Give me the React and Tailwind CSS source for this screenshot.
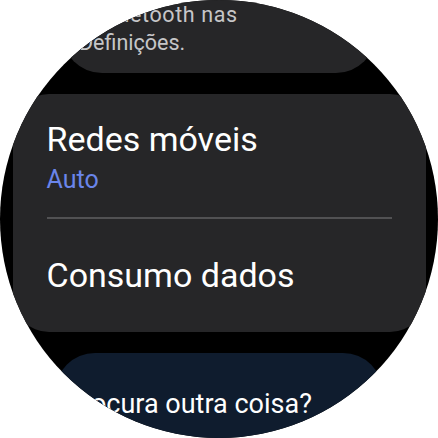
export default function App() {
    return (
        <div className="w-[438px] h-[438px] bg-white" style={{ fontFamily: "Roboto, 'Noto Sans', sans-serif" }}>
            {/* watch face */}
            <div className="w-[438px] h-[438px] rounded-full bg-black overflow-hidden flex flex-col items-center">
                {/* previous card, scrolled off the top */}
                <div className="w-[314px] -mt-[40px] pt-[41px] pb-[16px] pl-[17px] rounded-[40px] bg-[#262628] shrink-0">
                    <p className="text-[21.5px] leading-[28px] tracking-[0.6px] text-[#c6c6c8]">o Bluetooth nas</p>
                    <p className="text-[21.5px] leading-[28px] text-[#c6c6c8]">Definições.</p>
                </div>

                {/* main card */}
                <div className="w-[413px] mt-[21px] pt-[25px] pb-[37px] px-[34px] rounded-[36px] bg-[#262628] shrink-0">
                    <p className="text-[34px] leading-[40px] text-white">Redes móveis</p>
                    <p className="mt-[6px] text-[25px] leading-[30px] text-[#6a85ea]">Auto</p>
                    <div className="mt-[22px] h-[2px] bg-[#515153]" />
                    <p className="mt-[36px] text-[34px] leading-[40px] text-white">Consumo dados</p>
                </div>

                {/* next card */}
                <div className="w-[328px] mt-[21px] pt-[35px] pb-[40px] pl-[10px] rounded-[40px] bg-[#0f1c2e] shrink-0">
                    <p className="text-[27px] leading-[32px] text-white">Procura outra coisa?</p>
                </div>
            </div>
        </div>
    );
}
